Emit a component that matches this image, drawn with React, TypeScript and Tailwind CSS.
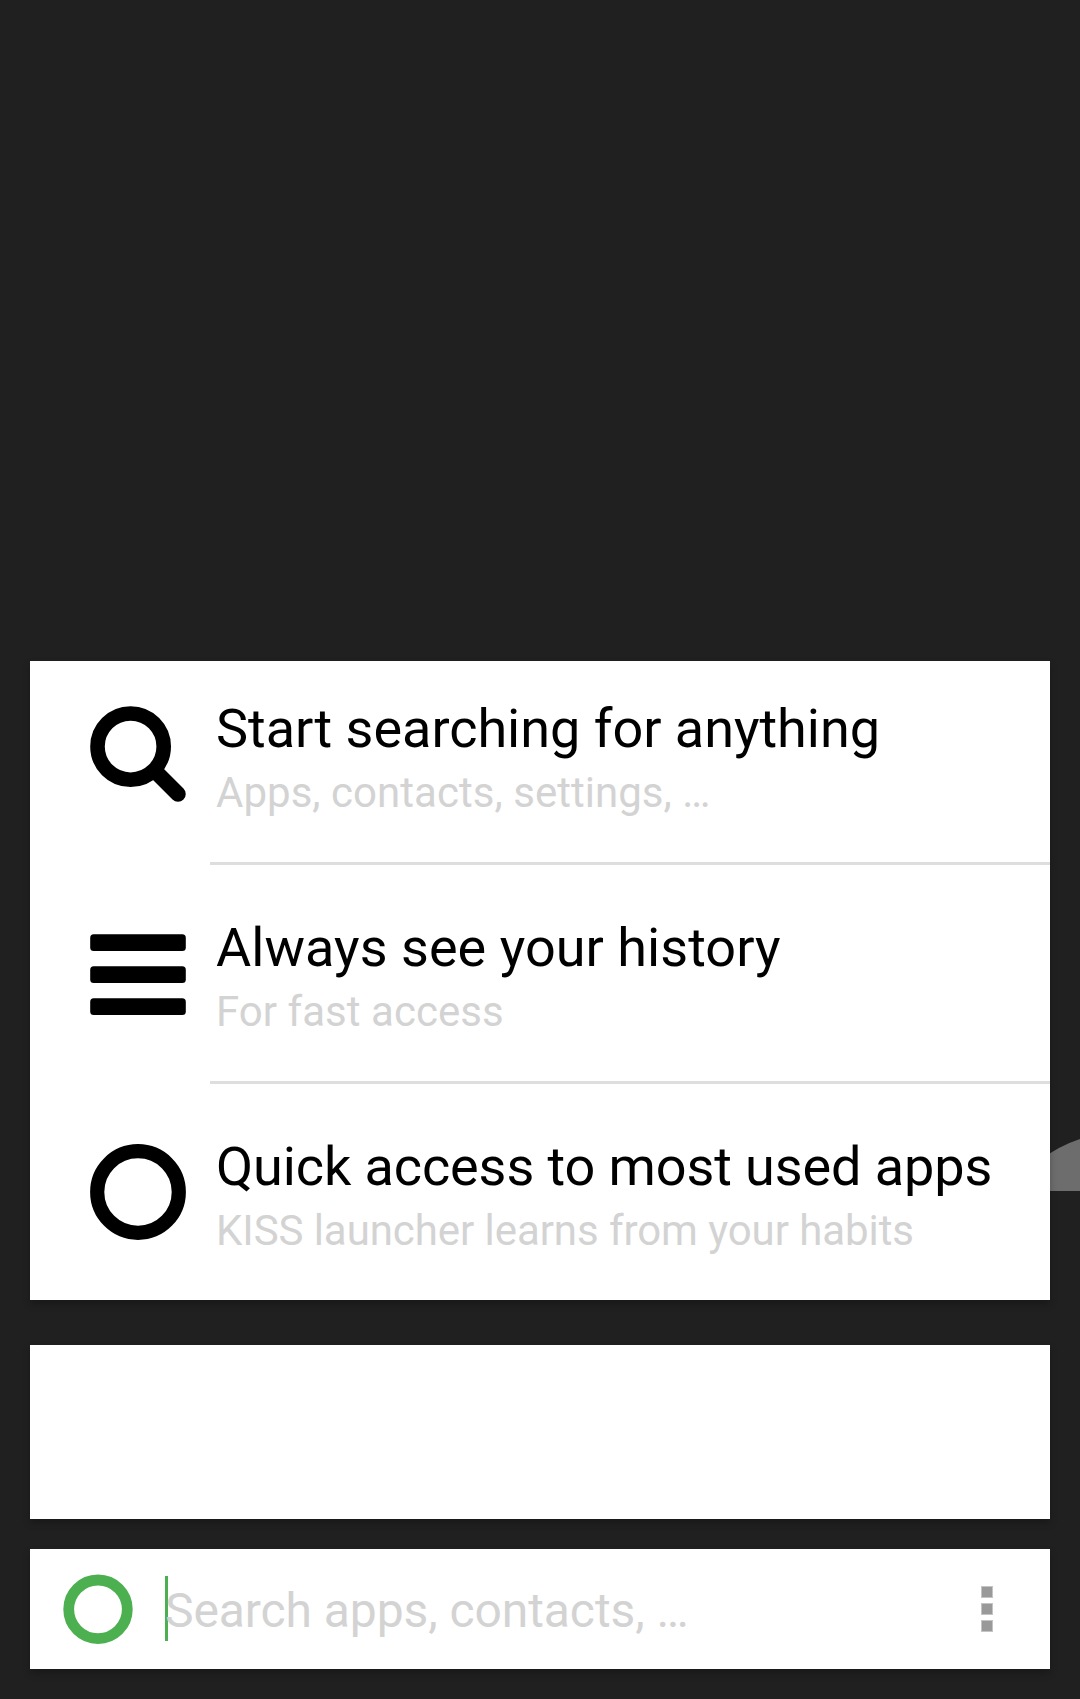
import type { ReactNode } from "react";

function SearchIcon() {
  return (
    <svg width="96" height="96" viewBox="0 0 96 96" fill="none" stroke="#000">
      <circle cx="40.6" cy="40.6" r="33.1" strokeWidth="14.6" />
      <path d="M66 66L88 88" strokeWidth="15.5" strokeLinecap="round" />
    </svg>
  );
}

function HistoryIcon() {
  return (
    <svg width="96" height="96" viewBox="0 0 96 96" fill="#000">
      <rect x="0.2" y="9.2" width="95.6" height="16.8" rx="3.5" />
      <rect x="0.2" y="41.2" width="95.6" height="16.8" rx="3.5" />
      <rect x="0.2" y="73.2" width="95.6" height="16.8" rx="3.5" />
    </svg>
  );
}

function RingIcon() {
  return (
    <svg width="96" height="96" viewBox="0 0 96 96" fill="none" stroke="#000">
      <circle cx="48" cy="48" r="40.8" strokeWidth="14.2" />
    </svg>
  );
}

interface RowProps {
  icon: ReactNode;
  title: string;
  subtitle: string;
  titleClass: string;
  subtitleClass: string;
}

function Row({ icon, title, subtitle, titleClass, subtitleClass }: RowProps) {
  return (
    <div className="flex h-[216px] shrink-0 pl-[60px]">
      <div className="mt-[60px] h-24 w-24 shrink-0">{icon}</div>
      <div className="ml-[30px] mt-[51px] whitespace-nowrap">
        <div className={`h-[68px] text-[54px] leading-[64px] text-black ${titleClass}`}>{title}</div>
        <div className={`h-[56px] text-[42px] leading-[56px] text-[#d3d3d3] ${subtitleClass}`}>{subtitle}</div>
      </div>
    </div>
  );
}

function Divider() {
  return <div className="ml-[180px] h-[3px] shrink-0 bg-[#dedede]" />;
}

const card = "bg-white shadow-[0_4px_7px_rgba(0,0,0,0.25)]";

export default function App() {
  return (
    <div className="relative h-[1699px] w-[1080px] overflow-hidden bg-[#202020] px-[30px] pt-[661px] font-['Roboto',sans-serif]">
      <svg className="absolute left-[1040px] top-[1130px]" width="40" height="61" viewBox="0 0 40 61">
        <path d="M0 30Q20 15.5 40 9V61H0Z" fill="#6d6d6d" />
      </svg>
      <div className="relative flex flex-col">
        <div className={card}>
          <div className="flex h-[639px] flex-col justify-end overflow-hidden">
            <Row
              icon={<SearchIcon />}
              title="Start searching for anything"
              subtitle="Apps, contacts, settings, …"
              titleClass="tracking-[-0.03px]"
              subtitleClass="tracking-[0.03px]"
            />
            <Divider />
            <Row
              icon={<HistoryIcon />}
              title="Always see your history"
              subtitle="For fast access"
              titleClass="tracking-[0.04px]"
              subtitleClass="tracking-[0.04px]"
            />
            <Divider />
            <Row
              icon={<RingIcon />}
              title="Quick access to most used apps"
              subtitle="KISS launcher learns from your habits"
              titleClass="tracking-[-0.1px]"
              subtitleClass="tracking-[-0.07px]"
            />
          </div>
        </div>
        <div className={`mt-[45px] h-[174px] ${card}`} />
        <div className={`mt-[30px] flex h-[120px] items-center pl-[33px] pr-[57px] ${card}`}>
          <svg width="70" height="70" viewBox="0 0 70 70" fill="none">
            <circle cx="35" cy="35.3" r="29.3" stroke="#4caf50" strokeWidth="10.8" />
          </svg>
          <div className="-mt-[1px] ml-8 h-[65px] w-[3px] bg-[#4caf50]" />
          <div className="relative -ml-[3px] mt-[3px] grow whitespace-nowrap text-[48px] leading-[56px] tracking-[-0.08px] text-[#d3d3d3]">
            Search apps, contacts, …
          </div>
          <div className="flex flex-col gap-[5px]">
            <div className="h-3 w-3 border border-[#c4c4c4] bg-[#999]" />
            <div className="h-3 w-3 border border-[#c4c4c4] bg-[#999]" />
            <div className="h-3 w-3 border border-[#c4c4c4] bg-[#999]" />
          </div>
        </div>
      </div>
    </div>
  );
}
